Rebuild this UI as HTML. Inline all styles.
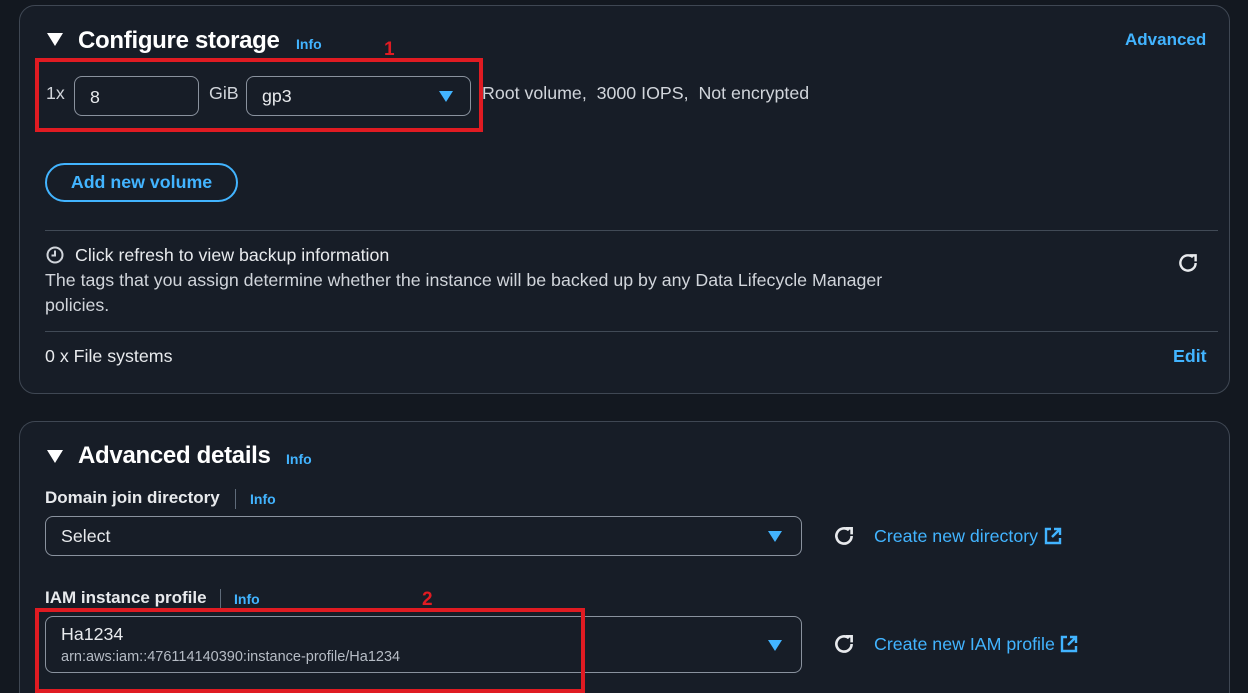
<!DOCTYPE html>
<html><head><meta charset="utf-8"><style>
*{margin:0;padding:0;box-sizing:border-box}
html,body{width:1248px;height:693px;overflow:hidden}
body{background:#131820;font-family:"Liberation Sans",sans-serif;color:#d1d5db;position:relative;font-size:17.8px}
.a{position:absolute;white-space:nowrap}
.panel{position:absolute;left:19px;width:1211px;background:#171d27;border:1px solid #3f4753;border-radius:16px}
.h{color:#fff;font-weight:bold;font-size:24px;letter-spacing:-0.3px}
.info{color:#42b4ff;font-weight:bold;font-size:14px}
.link{color:#42b4ff}
.box{position:absolute;border:1px solid #8a929e;border-radius:8px;background:#171d27}
.tri{position:absolute;width:0;height:0;border-left:7px solid transparent;border-right:7px solid transparent;border-top:11px solid #42b4ff}
.red{position:absolute;border:4px solid #e01b22}
.rn{position:absolute;color:#e01b22;font-weight:bold;font-size:19px}
.hr{position:absolute;height:1px;background:#414a56}
.lbl{color:#e8eaed;font-weight:bold;font-size:17px}
.sep{position:absolute;width:1px;height:20px;background:#5f6b7a}
</style></head><body>
<div class="panel" style="top:5px;height:389px"></div>
<div class="panel" style="top:421px;height:272px;border-bottom:none;border-radius:16px 16px 0 0"></div>

<div class="a" style="left:47px;top:33px;width:0;height:0;border-left:8px solid transparent;border-right:8px solid transparent;border-top:13px solid #fff"></div>
<div class="a h" style="left:78px;top:27px">Configure storage</div>
<div class="a info" style="left:296px;top:36px">Info</div>
<div class="a link" style="left:1125px;top:30px;font-weight:bold;font-size:17px">Advanced</div>

<div class="a" style="left:46px;top:83px">1x</div>
<div class="box" style="left:74px;top:76px;width:125px;height:40px"></div>
<div class="a" style="left:90px;top:87px;color:#e8eaed">8</div>
<div class="a" style="left:209px;top:83px">GiB</div>
<div class="box" style="left:246px;top:76px;width:225px;height:40px"></div>
<div class="a" style="left:262px;top:86px;color:#e8eaed">gp3</div>
<div class="tri" style="left:439px;top:91px"></div>
<div class="a" style="left:482px;top:83px">Root volume,&nbsp; 3000 IOPS,&nbsp; Not encrypted</div>
<div class="red" style="left:35px;top:58px;width:448px;height:74px"></div>
<div class="rn" style="left:384px;top:39px">1</div>

<div class="a" style="left:45px;top:163px;width:193px;height:39px;border:2px solid #42b4ff;border-radius:20px;color:#42b4ff;font-weight:bold;text-align:center;line-height:35px">Add new volume</div>

<div class="hr" style="left:45px;top:230px;width:1173px"></div>
<svg class="a" style="left:46px;top:246px" width="18" height="18" viewBox="0 0 18 18"><circle cx="9" cy="9" r="7.5" fill="none" stroke="#d1d5db" stroke-width="2"/><path d="M9 4.5V9.5H5.5" fill="none" stroke="#d1d5db" stroke-width="2"/></svg>
<div class="a" style="left:75px;top:245px;color:#e8eaed">Click refresh to view backup information</div>
<div class="a" style="left:45px;top:270px">The tags that you assign determine whether the instance will be backed up by any Data Lifecycle Manager</div>
<div class="a" style="left:45px;top:295px">policies.</div>
<svg class="a" style="left:1176px;top:251px" width="24" height="24" viewBox="0 0 22 22"><path d="M18 11a7 7 0 1 1-2.5-5.4" fill="none" stroke="#e8eaed" stroke-width="2.2"/><path d="M12.5 4H18V9.5" fill="none" stroke="#e8eaed" stroke-width="2.2"/></svg>
<div class="hr" style="left:45px;top:331px;width:1173px"></div>
<div class="a" style="left:45px;top:346px;color:#e8eaed">0 x File systems</div>
<div class="a link" style="left:1173px;top:346px;font-weight:bold">Edit</div>

<div class="a" style="left:47px;top:450px;width:0;height:0;border-left:8px solid transparent;border-right:8px solid transparent;border-top:13px solid #fff"></div>
<div class="a h" style="left:78px;top:442px">Advanced details</div>
<div class="a info" style="left:286px;top:451px">Info</div>

<div class="a lbl" style="left:45px;top:488px">Domain join directory</div>
<div class="sep" style="left:235px;top:489px"></div>
<div class="a info" style="left:250px;top:491px">Info</div>
<div class="box" style="left:45px;top:516px;width:757px;height:40px"></div>
<div class="a" style="left:61px;top:526px;color:#e8eaed">Select</div>
<div class="tri" style="left:768px;top:531px"></div>

<div class="a lbl" style="left:45px;top:588px">IAM instance profile</div>
<div class="sep" style="left:220px;top:589px"></div>
<div class="a info" style="left:234px;top:591px">Info</div>
<div class="box" style="left:45px;top:616px;width:757px;height:57px"></div>
<div class="a" style="left:61px;top:624px;color:#e8eaed">Ha1234</div>
<div class="a" style="left:61px;top:649px;font-size:14.5px;color:#b6bcc5">arn:aws:iam::476114140390:instance-profile/Ha1234</div>
<div class="tri" style="left:768px;top:640px"></div>
<div class="red" style="left:35px;top:608px;width:550px;height:85px"></div>
<div class="rn" style="left:422px;top:589px">2</div>

<svg class="a" style="left:832px;top:524px" width="24" height="24" viewBox="0 0 22 22"><path d="M18 11a7 7 0 1 1-2.5-5.4" fill="none" stroke="#e8eaed" stroke-width="2.4"/><path d="M12.5 4H18V9.5" fill="none" stroke="#e8eaed" stroke-width="2.4"/></svg>
<div class="a link" style="left:874px;top:526px">Create new directory</div>
<svg class="a" style="left:1044px;top:527px" width="18" height="18" viewBox="0 0 18 18"><path d="M7 2H2V16H16V11" fill="none" stroke="#42b4ff" stroke-width="2.4"/><path d="M10 2H16V8M16 2L8 10" fill="none" stroke="#42b4ff" stroke-width="2.4"/></svg>
<svg class="a" style="left:832px;top:632px" width="24" height="24" viewBox="0 0 22 22"><path d="M18 11a7 7 0 1 1-2.5-5.4" fill="none" stroke="#e8eaed" stroke-width="2.4"/><path d="M12.5 4H18V9.5" fill="none" stroke="#e8eaed" stroke-width="2.4"/></svg>
<div class="a link" style="left:874px;top:634px">Create new IAM profile</div>
<svg class="a" style="left:1060px;top:635px" width="18" height="18" viewBox="0 0 18 18"><path d="M7 2H2V16H16V11" fill="none" stroke="#42b4ff" stroke-width="2.4"/><path d="M10 2H16V8M16 2L8 10" fill="none" stroke="#42b4ff" stroke-width="2.4"/></svg>
</body></html>
